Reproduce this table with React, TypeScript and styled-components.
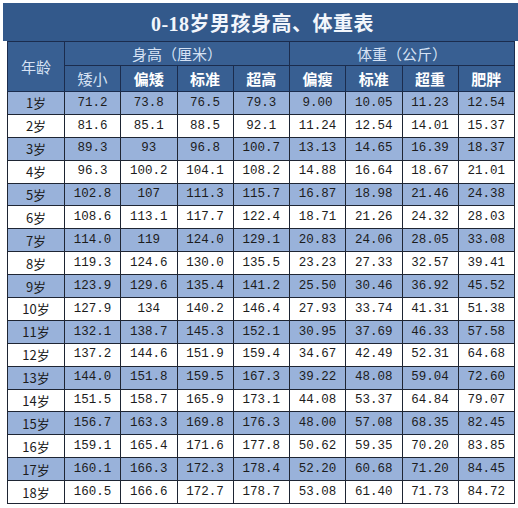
import React from 'react'
import styled, { createGlobalStyle } from 'styled-components'

const GlobalStyle = createGlobalStyle`
  html, body {
    margin: 0;
    padding: 0;
    background: #fff;
  }
`

const Page = styled.div`
  width: 518px;
  height: 508px;
  background: #fff;
  overflow: hidden;
`

const TitleBar = styled.div`
  margin: 3px 0 0 3px;
  height: 38px;
  background: #33598b;
  display: flex;
  align-items: center;
  justify-content: center;
  color: #f2f6fc;
  font-family: 'Liberation Serif', 'Noto Sans CJK SC', serif;
  font-weight: 700;
  font-size: 20px;
  letter-spacing: 0.5px;
  padding-left: 4px;
`

const Table = styled.table`
  margin-left: 7px;
  width: 508px;
  border-collapse: collapse;
  table-layout: fixed;
  font-family: 'Liberation Mono', 'Noto Sans CJK SC', monospace;
`

const HeadCell = styled.th<{ $light?: boolean; $h: number }>`
  height: ${(p) => p.$h}px;
  padding: 0;
  background: #385f92;
  border: 1px solid #1b2c4d;
  color: ${(p) => (p.$light ? '#d6e2f4' : '#ffffff')};
  font-family: 'Noto Sans CJK SC', sans-serif;
  font-weight: ${(p) => (p.$light ? 400 : 700)};
  font-size: 15px;
  text-align: center;
`

const Row = styled.tr<{ $alt: boolean }>`
  background: ${(p) => (p.$alt ? '#99b2da' : '#ffffff')};
`

const Cell = styled.td`
  height: 21.9px;
  padding: 0;
  border: 1px solid #1e2533;
  color: #1c1c1c;
  font-size: 12.5px;
  text-align: center;
  line-height: 1;
`

const AgeCell = styled(Cell)`
  font-family: 'Noto Sans CJK SC', sans-serif;
  font-size: 13px;
`

const heightCols = ['矮小', '偏矮', '标准', '超高']
const weightCols = ['偏瘦', '标准', '超重', '肥胖']

const rows: string[][] = [
  ['71.2', '73.8', '76.5', '79.3', '9.00', '10.05', '11.23', '12.54'],
  ['81.6', '85.1', '88.5', '92.1', '11.24', '12.54', '14.01', '15.37'],
  ['89.3', '93', '96.8', '100.7', '13.13', '14.65', '16.39', '18.37'],
  ['96.3', '100.2', '104.1', '108.2', '14.88', '16.64', '18.67', '21.01'],
  ['102.8', '107', '111.3', '115.7', '16.87', '18.98', '21.46', '24.38'],
  ['108.6', '113.1', '117.7', '122.4', '18.71', '21.26', '24.32', '28.03'],
  ['114.0', '119', '124.0', '129.1', '20.83', '24.06', '28.05', '33.08'],
  ['119.3', '124.6', '130.0', '135.5', '23.23', '27.33', '32.57', '39.41'],
  ['123.9', '129.6', '135.4', '141.2', '25.50', '30.46', '36.92', '45.52'],
  ['127.9', '134', '140.2', '146.4', '27.93', '33.74', '41.31', '51.38'],
  ['132.1', '138.7', '145.3', '152.1', '30.95', '37.69', '46.33', '57.58'],
  ['137.2', '144.6', '151.9', '159.4', '34.67', '42.49', '52.31', '64.68'],
  ['144.0', '151.8', '159.5', '167.3', '39.22', '48.08', '59.04', '72.60'],
  ['151.5', '158.7', '165.9', '173.1', '44.08', '53.37', '64.84', '79.07'],
  ['156.7', '163.3', '169.8', '176.3', '48.00', '57.08', '68.35', '82.45'],
  ['159.1', '165.4', '171.6', '177.8', '50.62', '59.35', '70.20', '83.85'],
  ['160.1', '166.3', '172.3', '178.4', '52.20', '60.68', '71.20', '84.45'],
  ['160.5', '166.6', '172.7', '178.7', '53.08', '61.40', '71.73', '84.72'],
]

export default function App() {
  return (
    <Page>
      <GlobalStyle />
      <TitleBar>0-18岁男孩身高、体重表</TitleBar>
      <Table>
        <colgroup>
          <col style={{ width: 57 }} />
          {Array.from({ length: 8 }).map((_, i) => (
            <col key={i} />
          ))}
        </colgroup>
        <thead>
          <tr>
            <HeadCell $light $h={48} rowSpan={2}>
              年龄
            </HeadCell>
            <HeadCell $light $h={23} colSpan={4}>
              身高（厘米）
            </HeadCell>
            <HeadCell $light $h={23} colSpan={4}>
              体重（公斤）
            </HeadCell>
          </tr>
          <tr>
            {heightCols.map((c, i) => (
              <HeadCell key={'h' + i} $light={i === 0} $h={25}>
                {c}
              </HeadCell>
            ))}
            {weightCols.map((c, i) => (
              <HeadCell key={'w' + i} $h={25}>
                {c}
              </HeadCell>
            ))}
          </tr>
        </thead>
        <tbody>
          {rows.map((r, i) => (
            <Row key={i} $alt={i % 2 === 0}>
              <AgeCell>{i + 1}岁</AgeCell>
              {r.map((v, j) => (
                <Cell key={j}>{v}</Cell>
              ))}
            </Row>
          ))}
        </tbody>
      </Table>
    </Page>
  )
}
